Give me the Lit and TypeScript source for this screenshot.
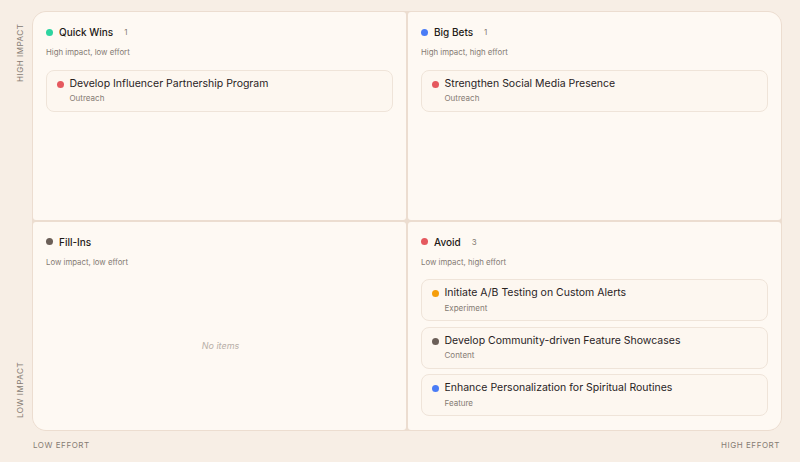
import { html, css, LitElement } from 'lit';
import { customElement } from 'lit/decorators.js';

interface Item {
  title: string;
  tag: string;
  color: string;
}

interface Quadrant {
  name: string;
  hint: string;
  color: string;
  items: Item[];
}

const RED = '#e5595f';
const BLUE = '#4a7cf6';
const AMBER = '#f59e0b';
const GREY = '#6b5f58';

const QUADRANTS: Quadrant[] = [
  {
    name: 'Quick Wins',
    hint: 'High impact, low effort',
    color: '#2dd4a0',
    items: [{ title: 'Develop Influencer Partnership Program', tag: 'Outreach', color: RED }],
  },
  {
    name: 'Big Bets',
    hint: 'High impact, high effort',
    color: BLUE,
    items: [{ title: 'Strengthen Social Media Presence', tag: 'Outreach', color: RED }],
  },
  { name: 'Fill-Ins', hint: 'Low impact, low effort', color: GREY, items: [] },
  {
    name: 'Avoid',
    hint: 'Low impact, high effort',
    color: RED,
    items: [
      { title: 'Initiate A/B Testing on Custom Alerts', tag: 'Experiment', color: AMBER },
      { title: 'Develop Community-driven Feature Showcases', tag: 'Content', color: GREY },
      { title: 'Enhance Personalization for Spiritual Routines', tag: 'Feature', color: BLUE },
    ],
  },
];

@customElement('app-root')
export class AppRoot extends LitElement {
  renderQuadrant(q: Quadrant) {
    return html`
      <section class="quadrant">
        <header class="head">
          <span class="dot" style="background:${q.color}"></span>
          <span class="name">${q.name}</span>
          ${q.items.length ? html`<span class="count">${q.items.length}</span>` : ''}
        </header>
        <p class="hint">${q.hint}</p>
        ${q.items.length
          ? html`<div class="items">
              ${q.items.map(
                (item) => html`
                  <article class="item">
                    <span class="dot" style="background:${item.color}"></span>
                    <div class="body">
                      <div class="title">${item.title}</div>
                      <div class="tag">${item.tag}</div>
                    </div>
                  </article>
                `
              )}
            </div>`
          : html`<div class="empty">No items</div>`}
      </section>
    `;
  }

  render() {
    return html`
      <div class="page">
        <div class="y-axis">
          <span>HIGH IMPACT</span>
          <span>LOW IMPACT</span>
        </div>
        <div class="board">${QUADRANTS.map((q) => this.renderQuadrant(q))}</div>
        <div class="x-axis">
          <span>LOW EFFORT</span>
          <span>HIGH EFFORT</span>
        </div>
      </div>
    `;
  }

  static styles = css`
    :host {
      display: block;
      width: 800px;
      height: 462px;
      background: #f7eee5;
      font-family: Inter, 'Liberation Sans', sans-serif;
      color: #1f1a17;
      overflow: hidden;
    }

    .page {
      display: grid;
      grid-template-columns: 750px;
      grid-template-rows: 420px auto;
      padding: 11px 18px 0 32px;
      position: relative;
    }

    .y-axis {
      position: absolute;
      left: 14px;
      top: 24px;
      height: 394px;
      display: flex;
      justify-content: space-between;
      writing-mode: vertical-rl;
      transform: rotate(180deg);
      flex-direction: row-reverse;
      font-size: 8px;
      line-height: 12px;
      letter-spacing: 0.55px;
      color: #857b73;
    }

    .board {
      display: grid;
      grid-template-columns: 1fr 1fr;
      grid-template-rows: 207.5px 1fr;
      gap: 2px;
      background: #ecddd0;
      border: 1px solid #ecddd0;
      border-radius: 14px;
      overflow: hidden;
    }

    .quadrant {
      background: #fef9f3;
      padding: 12px 13px 0 13px;
      border-radius: 3px;
      min-width: 0;
      display: flex;
      flex-direction: column;
    }

    .head {
      display: flex;
      align-items: center;
      height: 16px;
    }

    .dot {
      flex: none;
      width: 7px;
      height: 7px;
      border-radius: 50%;
    }

    .name {
      margin-left: 6px;
      font-size: 10px;
      font-weight: 500;
    }

    .count {
      margin-left: 11px;
      font-size: 8px;
      color: #857b73;
    }

    .hint {
      margin: 6px 0 0;
      font-size: 7.8px;
      line-height: 12px;
      color: #857b73;
    }

    .items {
      display: flex;
      flex-direction: column;
      gap: 5.5px;
      margin-top: 11.5px;
    }

    .item {
      display: flex;
      align-items: flex-start;
      height: 42px;
      box-sizing: border-box;
      padding: 5px 10px;
      background: #fdf7f0;
      border: 1px solid #efe4d9;
      border-radius: 8px;
    }

    .item .dot {
      margin-top: 5px;
    }

    .body {
      margin-left: 5.5px;
    }

    .title {
      font-size: 10.5px;
      line-height: 15px;
      color: #29231f;
    }

    .tag {
      margin-top: 1.5px;
      font-size: 8px;
      line-height: 13px;
      color: #857b73;
    }

    .empty {
      flex: 1;
      display: flex;
      align-items: center;
      justify-content: center;
      padding: 0 0 6px 2px;
      font-size: 9px;
      font-style: italic;
      color: #b8afa7;
    }

    .x-axis {
      display: flex;
      justify-content: space-between;
      padding: 8px 2px 0 1px;
      font-size: 8px;
      line-height: 12px;
      letter-spacing: 0.55px;
      color: #857b73;
    }
  `;
}
